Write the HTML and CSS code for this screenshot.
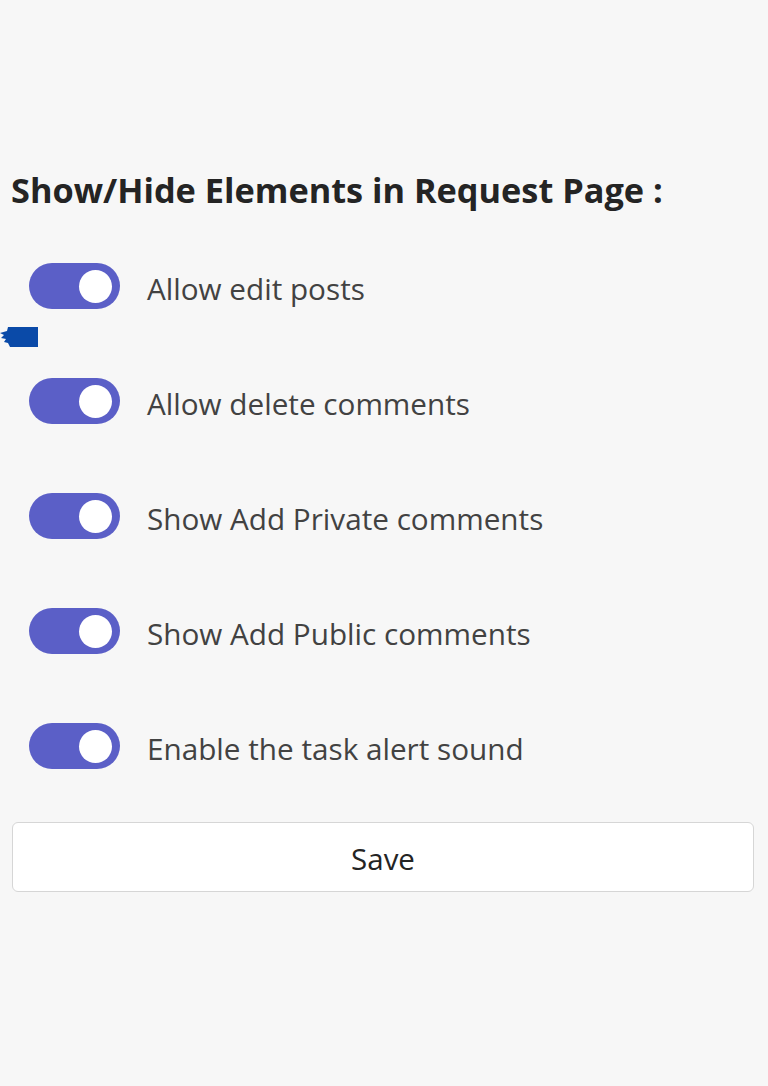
FILE: index.html
```html
<!DOCTYPE html>
<html lang="en">
<head>
<meta charset="utf-8">
<title>Settings</title>
<link rel="stylesheet" href="styles.css">
</head>
<body>
<main class="page">
  <h1 class="title">Show/Hide Elements in Request Page :</h1>
  <ul class="options">
    <li class="option"><span class="toggle on"><span class="knob"></span></span><span class="label">Allow edit posts</span></li>
    <li class="option"><span class="toggle on"><span class="knob"></span></span><span class="label">Allow delete comments</span></li>
    <li class="option"><span class="toggle on"><span class="knob"></span></span><span class="label">Show Add Private comments</span></li>
    <li class="option"><span class="toggle on"><span class="knob"></span></span><span class="label">Show Add Public comments</span></li>
    <li class="option"><span class="toggle on"><span class="knob"></span></span><span class="label">Enable the task alert sound</span></li>
  </ul>
  <button class="save" type="button">Save</button>
</main>
<svg class="pointer" width="38" height="21" viewBox="0 0 38 21" aria-hidden="true">
  <polygon points="8,1 38,1 38,21 10,21 8,17 4,16 6,13 1,12 4,9 0,7 7,5" fill="#0a4aa8"/>
</svg>
</body>
</html>
```
FILE: styles.css
```css
html, body {
  margin: 0;
  padding: 0;
  background: #f7f7f7;
}
body {
  width: 768px;
  height: 1086px;
  position: relative;
  overflow: hidden;
  font-family: "Open Sans", "Noto Sans", sans-serif;
}
.page {
  padding: 168px 14px 0 12px;
}
.title {
  margin: 0 0 0 -1px;
  font-size: 34.3px;
  font-weight: 700;
  color: #242424;
  line-height: 44px;
}
.options {
  list-style: none;
  margin: 0;
  padding: 0;
  margin-top: 51px;
}
.option {
  display: flex;
  align-items: center;
  height: 46px;
  margin-bottom: 69px;
  padding-left: 17px;
}
.toggle {
  width: 91px;
  height: 46px;
  border-radius: 23px;
  background: #5b5fc7;
  display: flex;
  align-items: center;
  justify-content: flex-end;
  padding-right: 8px;
  box-sizing: border-box;
  flex: none;
}
.knob {
  width: 33px;
  height: 33px;
  border-radius: 50%;
  background: #ffffff;
}
.label {
  margin-left: 27px;
  padding-top: 5px;
  font-size: 29.7px;
  color: #424242;
}
.save {
  display: block;
  width: 742px;
  height: 70px;
  margin-top: -16px;
  padding-top: 3px;
  background: #ffffff;
  border: 1px solid #d6d6d6;
  border-radius: 6px;
  font-family: inherit;
  font-size: 29.5px;
  color: #242424;
  cursor: pointer;
}
.pointer {
  position: absolute;
  left: 0;
  top: 326px;
}
```
